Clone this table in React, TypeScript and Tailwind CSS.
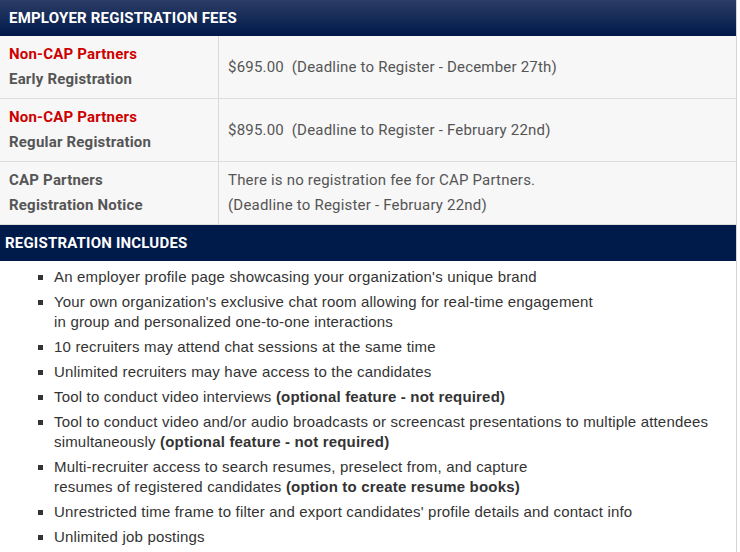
import React from "react";

type FeeRow = {
  partner: string;
  partnerRed: boolean;
  label: string;
  lines: string[];
};

const feeRows: FeeRow[] = [
  {
    partner: "Non-CAP Partners",
    partnerRed: true,
    label: "Early Registration",
    lines: ["$695.00\u00a0 (Deadline to Register - December 27th)"],
  },
  {
    partner: "Non-CAP Partners",
    partnerRed: true,
    label: "Regular Registration",
    lines: ["$895.00\u00a0 (Deadline to Register - February 22nd)"],
  },
  {
    partner: "CAP Partners",
    partnerRed: false,
    label: "Registration Notice",
    lines: ["There is no registration fee for CAP Partners.", "(Deadline to Register - February 22nd)"],
  },
];

// each item: plain text, optional bold tail, optional forced break
const includes: { text: React.ReactNode }[] = [
  { text: "An employer profile page showcasing your organization's unique brand" },
  {
    text: (
      <>
        Your own organization's exclusive chat room allowing for real-time engagement
        <br />
        in group and personalized one-to-one interactions
      </>
    ),
  },
  { text: "10 recruiters may attend chat sessions at the same time" },
  { text: "Unlimited recruiters may have access to the candidates" },
  {
    text: (
      <>
        Tool to conduct video interviews <b>(optional feature - not required)</b>
      </>
    ),
  },
  {
    text: (
      <>
        Tool to conduct video and/or audio broadcasts or screencast presentations to multiple attendees
        <br />
        simultaneously <b>(optional feature - not required)</b>
      </>
    ),
  },
  {
    text: (
      <>
        Multi-recruiter access to search resumes, preselect from, and capture
        <br />
        resumes of registered candidates <b>(option to create resume books)</b>
      </>
    ),
  },
  { text: "Unrestricted time frame to filter and export candidates' profile details and contact info" },
  { text: "Unlimited job postings" },
];

function SectionHeader({ title, gradient }: { title: string; gradient?: boolean }) {
  return (
    <div
      className={
        gradient
          ? "h-[36px] flex items-center pl-[9px] bg-gradient-to-b from-[#2c3d66] to-[#001849] text-white font-bold text-[15px] tracking-[0.2px] font-['Roboto',sans-serif]"
          : "h-[36px] flex items-center pl-[5px] bg-[#001a4a] text-white font-bold text-[15px] tracking-[0.2px] font-['Roboto',sans-serif]"
      }
    >
      {title}
    </div>
  );
}

export default function App() {
  return (
    <div className="w-[740px] h-[552px] bg-white overflow-hidden">
      <div className="w-[737px] border-r border-[#d4d4d4] min-h-[552px]">
        <SectionHeader title="EMPLOYER REGISTRATION FEES" gradient />

        <div className="font-['Roboto',sans-serif] text-[15px] tracking-[0.2px] leading-[25px] bg-[#f7f7f7]">
          {feeRows.map((row, i) => (
            <div key={i} className="flex border-b border-[#dddddd]">
              <div className="w-[219px] shrink-0 border-r border-[#d9d9d9] pl-[9px] py-[6px] font-bold text-[#555555]">
                <div className={row.partnerRed ? "text-[#cc0000]" : ""}>{row.partner}</div>
                <div>{row.label}</div>
              </div>
              <div className="flex-1 pl-[9px] py-[6px] text-[#555555] flex flex-col justify-center">
                {row.lines.map((l, j) => (
                  <div key={j}>{l}</div>
                ))}
              </div>
            </div>
          ))}
        </div>

        <SectionHeader title="REGISTRATION INCLUDES" />

        <ul className="pt-[6px] pr-[10px] font-['Liberation_Sans',Arial,sans-serif] text-[15px] tracking-[0.18px] leading-[20px] text-[#333333]">
          {includes.map((item, i) => (
            <li key={i} className="flex mb-[5px]">
              <span className="w-[5px] h-[5px] bg-[#333333] ml-[38px] mr-[11px] mt-[8px] shrink-0" />
              <span>{item.text}</span>
            </li>
          ))}
        </ul>
      </div>
    </div>
  );
}
